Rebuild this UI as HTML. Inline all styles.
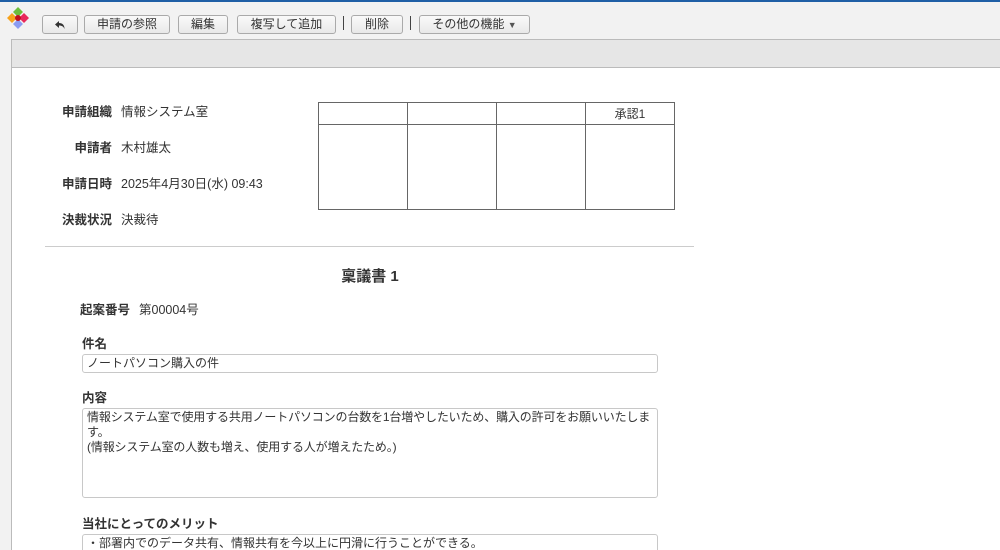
<!DOCTYPE html>
<html style="overflow:hidden;width:1000px;height:550px"><head><meta charset="utf-8"><style>
*{box-sizing:border-box;margin:0;padding:0}
body{width:1000px;height:550px;overflow:hidden;background:#f2f2f2;font-family:"Liberation Sans","Noto Sans CJK JP",sans-serif;font-size:12px;color:#333;position:relative}
.top{position:absolute;left:0;top:0;width:1000px;height:2px;background:#1f5fa6}
.btn{position:absolute;top:15px;height:19px;border:1px solid #aaa;border-radius:3px;background:linear-gradient(#fafafa,#e8e8e8);font-size:12px;line-height:17px;text-align:center;color:#333}
.sep{position:absolute;top:16px;width:1px;height:14px;background:#444}
.panel{position:absolute;left:11px;top:39px;width:989px;height:511px;border-left:1px solid #bbb;border-top:1px solid #bbb;background:#fff}
.band{height:28px;background:#e6e6e6;border-bottom:1px solid #bbb}
.lbl{position:absolute;font-weight:bold;text-align:right;width:70px;left:42px;font-size:12.5px}
.val{position:absolute;left:121px;font-size:12.5px}
table{position:absolute;left:318px;top:102px;border-collapse:collapse}
td{border:1px solid #666;width:89px;padding:0;text-align:center;font-size:12px}
.box{position:absolute;left:82px;width:576px;border:1px solid #c8c8c8;border-radius:3px;padding:1px 4px;font-size:12px;line-height:15px;color:#333;overflow:hidden}
.h{position:absolute;left:82px;font-weight:bold;font-size:12.5px}
</style></head><body>
<div class="top"></div>
<svg style="position:absolute;left:5px;top:6px" width="26" height="26" viewBox="0 0 26 26">
<path d="M13 1L18 6L13 11L8 6Z" fill="#6cbf3c"/><path d="M7 7L12 12L7 17L2 12Z" fill="#f7a21b"/><path d="M19 7L24 12L19 17L14 12Z" fill="#e8285b"/><path d="M13 13L18 18L13 23L8 18Z" fill="#8b9cf2"/><circle cx="13" cy="12" r="3" fill="#c0121e"/></svg>
<div class="btn" style="left:42px;width:36px"><svg width="12" height="12" viewBox="0 0 12 12" style="margin-top:3px"><path d="M5 2L1 5.5L5 9V6.5C8 6.5 9.5 7.5 10.5 10C10.5 6 8.5 4 5 4Z" fill="#333"/></svg></div>
<div class="btn" style="left:84px;width:86px">申請の参照</div>
<div class="btn" style="left:178px;width:50px">編集</div>
<div class="btn" style="left:237px;width:99px">複写して追加</div>
<div class="sep" style="left:343px"></div>
<div class="btn" style="left:351px;width:52px">削除</div>
<div class="sep" style="left:410px"></div>
<div class="btn" style="left:419px;width:111px">その他の機能 <span style="font-size:9px;color:#555">▼</span></div>
<div class="panel"><div class="band"></div></div>
<div class="lbl" style="top:101px">申請組織</div><div class="val" style="top:101px">情報システム室</div>
<div class="lbl" style="top:137px">申請者</div><div class="val" style="top:137px">木村雄太</div>
<div class="lbl" style="top:173px">申請日時</div><div class="val" style="top:173px">2025年4月30日(水) 09:43</div>
<div class="lbl" style="top:209px">決裁状況</div><div class="val" style="top:209px">決裁待</div>
<table><tr style="height:22px"><td></td><td></td><td></td><td>承認1</td></tr><tr style="height:85px"><td></td><td></td><td></td><td></td></tr></table>
<div style="position:absolute;left:45px;top:246px;width:649px;height:1px;background:#ccc"></div>
<div style="position:absolute;left:0;width:740px;top:265px;text-align:center;font-weight:bold;font-size:15px">稟議書 1</div>
<div class="h" style="left:80px;top:299px">起案番号</div><div style="position:absolute;left:139px;top:299px;font-size:12.5px">第00004号</div>
<div class="h" style="top:333px">件名</div>
<div class="box" style="top:354px;height:19px">ノートパソコン購入の件</div>
<div class="h" style="top:387px">内容</div>
<div class="box" style="top:408px;height:90px;letter-spacing:-0.15px">情報システム室で使用する共用ノートパソコンの台数を1台増やしたいため、購入の許可をお願いいたします。<br>(情報システム室の人数も増え、使用する人が増えたため。)</div>
<div class="h" style="top:513px">当社にとってのメリット</div>
<div class="box" style="top:534px;height:30px">・部署内でのデータ共有、情報共有を今以上に円滑に行うことができる。</div>
</body></html>
